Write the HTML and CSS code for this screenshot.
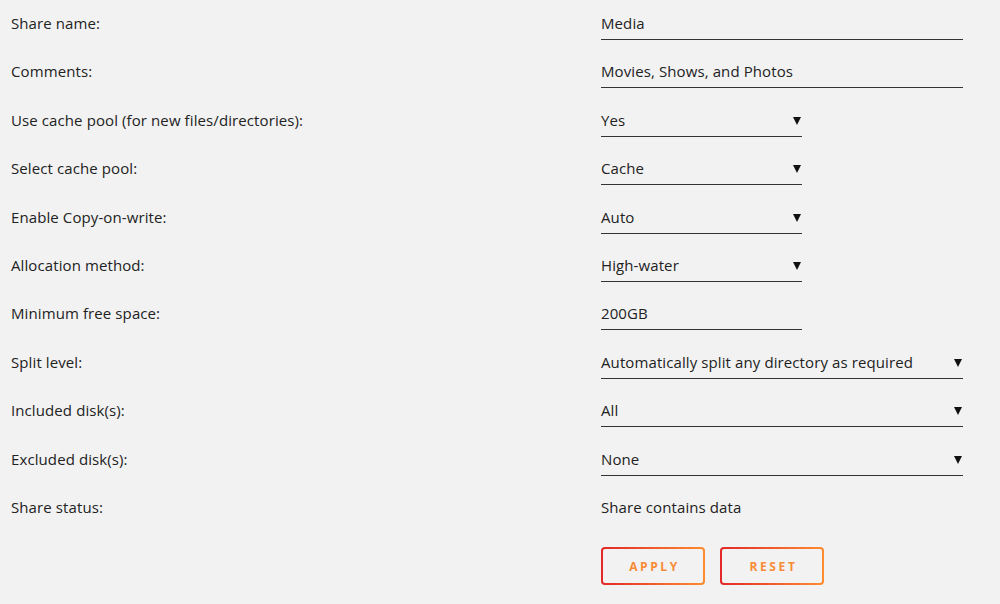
FILE: index.html
```html
<!DOCTYPE html>
<html lang="en">

<head>
    <meta charset="UTF-8">
    <meta name="viewport" content="width=device-width, initial-scale=1.0">
    <title>Share Settings</title>
    <link rel="stylesheet" href="styles.css">
</head>

<body>
    <form class="share">
        <div class="row">
            <div class="label">Share name:</div>
            <div class="field wide">Media</div>
        </div>
        <div class="row">
            <div class="label">Comments:</div>
            <div class="field wide">Movies, Shows, and Photos</div>
        </div>
        <div class="row">
            <div class="label">Use cache pool (for new files/directories):</div>
            <div class="field select">Yes</div>
        </div>
        <div class="row">
            <div class="label">Select cache pool:</div>
            <div class="field select">Cache</div>
        </div>
        <div class="row">
            <div class="label">Enable Copy-on-write:</div>
            <div class="field select">Auto</div>
        </div>
        <div class="row">
            <div class="label">Allocation method:</div>
            <div class="field select">High-water</div>
        </div>
        <div class="row">
            <div class="label">Minimum free space:</div>
            <div class="field">200GB</div>
        </div>
        <div class="row">
            <div class="label">Split level:</div>
            <div class="field wide select">Automatically split any directory as required</div>
        </div>
        <div class="row">
            <div class="label">Included disk(s):</div>
            <div class="field wide select">All</div>
        </div>
        <div class="row">
            <div class="label">Excluded disk(s):</div>
            <div class="field wide select">None</div>
        </div>
        <div class="row">
            <div class="label">Share status:</div>
            <div class="plain">Share contains data</div>
        </div>
        <div class="row">
            <div class="label"></div>
            <div class="buttons">
                <button type="button" class="btn">Apply</button>
                <button type="button" class="btn">Reset</button>
            </div>
        </div>
    </form>
</body>

</html>
```

FILE: styles.css
```css
* {
    margin: 0;
    padding: 0;
    box-sizing: border-box;
}

body {
    background: #f2f2f2;
    color: #222;
    font-family: "Open Sans", "Noto Sans", sans-serif;
    font-size: 15px;
    letter-spacing: 0.1px;
    padding: 8px 0 0 11px;
}

.row {
    display: grid;
    grid-template-columns: 590px auto;
    margin-bottom: 16.4px;
}

.label {
    padding-top: 5px;
    line-height: 20px;
}

.field {
    position: relative;
    width: 201px;
    padding: 5px 0 6px;
    line-height: 20px;
    border-bottom: 1.5px solid #333;
}

.field.wide {
    width: 362px;
}

.select::after {
    content: "";
    position: absolute;
    right: 1px;
    top: 12px;
    border-left: 4px solid transparent;
    border-right: 4px solid transparent;
    border-top: 8px solid #111;
}

.plain {
    padding-top: 5px;
    line-height: 20px;
}

.buttons {
    display: flex;
    gap: 15px;
    padding-top: 14px;
}

.btn {
    width: 104px;
    height: 38px;
    border: 2px solid transparent;
    border-radius: 4px;
    background: linear-gradient(#f2f2f2, #f2f2f2) padding-box,
        linear-gradient(90deg, #e22828, #ff8c2f) border-box;
    color: #f78b36;
    font-family: "Open Sans", "Noto Sans", sans-serif;
    font-size: 12px;
    font-weight: 700;
    letter-spacing: 2.6px;
    text-transform: uppercase;
    padding-left: 3px;
}
```
